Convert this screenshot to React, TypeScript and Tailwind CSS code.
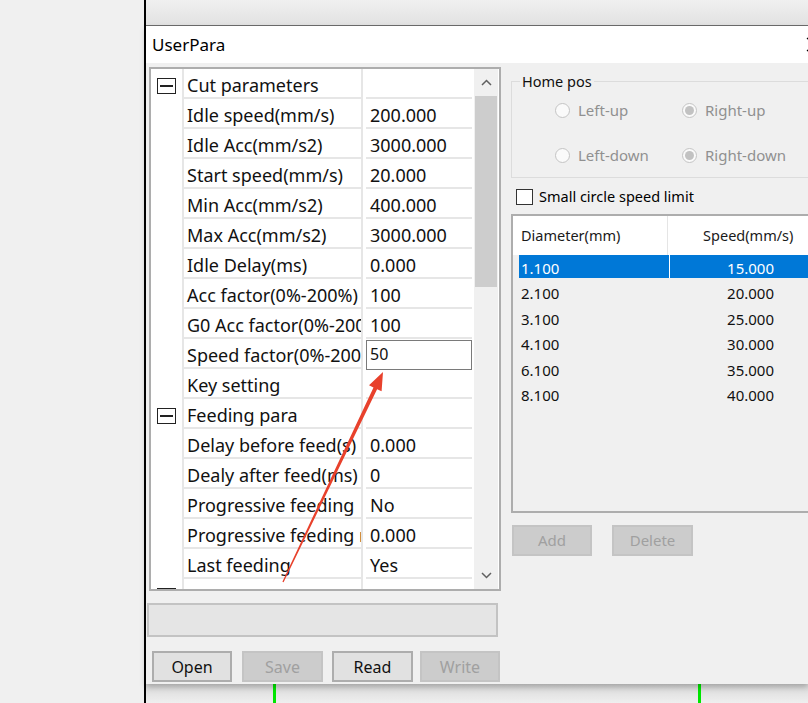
import React from "react";

type Row = { group?: boolean; name: string; value?: string; edit?: boolean };

const rows: Row[] = [
  { group: true, name: "Cut parameters" },
  { name: "Idle speed(mm/s)", value: "200.000" },
  { name: "Idle Acc(mm/s2)", value: "3000.000" },
  { name: "Start speed(mm/s)", value: "20.000" },
  { name: "Min Acc(mm/s2)", value: "400.000" },
  { name: "Max Acc(mm/s2)", value: "3000.000" },
  { name: "Idle Delay(ms)", value: "0.000" },
  { name: "Acc factor(0%-200%)", value: "100" },
  { name: "G0 Acc factor(0%-200%)", value: "100" },
  { name: "Speed factor(0%-200%)", value: "50", edit: true },
  { name: "Key setting", value: "" },
  { group: true, name: "Feeding para" },
  { name: "Delay before feed(s)", value: "0.000" },
  { name: "Dealy after feed(ms)", value: "0" },
  { name: "Progressive feeding", value: "No" },
  { name: "Progressive feeding rate", value: "0.000" },
  { name: "Last feeding", value: "Yes" },
  { group: true, name: "" },
];

const speeds = [
  { d: "1.100", s: "15.000" },
  { d: "2.100", s: "20.000" },
  { d: "3.100", s: "25.000" },
  { d: "4.100", s: "30.000" },
  { d: "6.100", s: "35.000" },
  { d: "8.100", s: "40.000" },
];

/* ---------- small pieces ---------- */
function Toggle() {
  return (
    <div className="flex h-[16px] w-[19px] items-center justify-center border-[1.5px] border-[#222]">
      <div className="h-[1.5px] w-[13px] bg-[#222]" />
    </div>
  );
}

function Chevron({ down }: { down?: boolean }) {
  return (
    <svg width="11" height="7" viewBox="0 0 11 7">
      <polyline
        points={down ? "1,1 5.5,5.5 10,1" : "1,6 5.5,1.5 10,6"}
        fill="none"
        stroke="#606060"
        strokeWidth="1.5"
      />
    </svg>
  );
}

function GridRow({ row }: { row: Row }) {
  return (
    <div className="flex h-[30px] shrink-0">
      <div className="w-[31px] shrink-0 pl-[6px] pt-[9px]">{row.group && <Toggle />}</div>
      <div className="w-[181px] shrink-0 overflow-hidden whitespace-nowrap border-x-2 border-b-2 border-[#e6e6e6] pl-[3px] pt-[4px] leading-[24px]">
        {row.name}
      </div>
      <div className="w-[3px] shrink-0" />
      <div className="relative w-[106px] shrink-0 whitespace-nowrap border-b-2 border-[#e6e6e6] pl-[4px] pt-[4px] leading-[24px]">
        {row.edit ? (
          <div className="absolute left-0 top-[1px] h-[30px] w-[106px] border border-[#7a7a7a] bg-white pl-[3px] text-[16px] leading-[26px]">
            {row.value}
          </div>
        ) : (
          row.value
        )}
      </div>
    </div>
  );
}

function Radio({ label, checked }: { label: string; checked?: boolean }) {
  return (
    <div className="flex w-[127px] items-center">
      <span className="flex h-[15px] w-[15px] shrink-0 items-center justify-center rounded-full border border-[#c4c4c4] bg-[#fafafa]">
        {checked && <span className="h-[9px] w-[9px] rounded-full bg-[#c2c2c2]" />}
      </span>
      <span className="ml-[8px] whitespace-nowrap text-[15px] leading-[20px] text-[#909090]">{label}</span>
    </div>
  );
}

/* ---------- main ---------- */
export default function App() {
  return (
    <div className="relative flex h-[703px] w-[808px] overflow-hidden bg-[#f0f0f0] font-['Noto_Sans',sans-serif] text-black">
      <div className="w-[144px] shrink-0 bg-[#f0f0f0]" />
      <div className="w-[2px] shrink-0 bg-black" />

      <div className="flex min-w-0 flex-1 flex-col">
        {/* window behind, top */}
        <div className="h-[26px] shrink-0 border-b border-[#6d6d6d] bg-gradient-to-b from-[#f0f0f0] to-[#e2e2e2]" />

        {/* dialog */}
        <div className="relative z-10 flex shrink-0 flex-col shadow-[0_3px_6px_rgba(0,0,0,0.25)]">
          <div className="flex h-[37px] items-center bg-white pl-[6px] text-[17px]">
            <span>UserPara</span>
            <svg className="-mr-[14px] ml-auto shrink-0" width="16" height="15" viewBox="0 0 16 15">
              <path d="M1 1 L15 14 M15 1 L1 14" stroke="#000" strokeWidth="1.2" />
            </svg>
          </div>

          <div className="flex h-[621px] overflow-hidden bg-[#f0f0f0] pl-[3px]">
            {/* LEFT: property grid */}
            <div className="mt-[4px] flex w-[352px] shrink-0 flex-col">
              <div className="flex h-[524px] border-2 border-[#adadad] bg-white text-[18px] text-[#111]">
                <div className="flex w-[323px] shrink-0 flex-col overflow-hidden">
                  {rows.map((r, i) => (
                    <GridRow key={i} row={r} />
                  ))}
                </div>
                <div className="flex w-[24px] shrink-0 flex-col bg-[#f0f0f0]">
                  <div className="flex h-[27px] items-center justify-center">
                    <Chevron />
                  </div>
                  <div className="mx-[1px] h-[191px] bg-[#cdcdcd]" />
                  <div className="flex-1" />
                  <div className="flex h-[27px] items-center justify-center">
                    <Chevron down />
                  </div>
                </div>
              </div>

              <div className="-ml-[2px] mt-[12px] h-[34px] w-[351px] border-2 border-[#c3c3c3] bg-[#e5e5e5]" />

              <div className="mt-[14px] flex h-[31px] text-[16px]">
                <button className="ml-[3px] w-[80px] border-2 border-[#adadad] bg-[#e1e1e1] text-[#111]">Open</button>
                <button className="ml-[10px] w-[81px] border-2 border-[#c4c4c4] bg-[#cccccc] text-[#a0a0a0]">Save</button>
                <button className="ml-[9px] w-[81px] border-2 border-[#adadad] bg-[#e1e1e1] text-[#111]">Read</button>
                <button className="ml-[7px] w-[80px] border-2 border-[#c4c4c4] bg-[#cccccc] text-[#a0a0a0]">Write</button>
              </div>
            </div>

            {/* RIGHT */}
            <div className="ml-[10px] mt-[9px] flex w-[320px] shrink-0 flex-col">
              <fieldset className="h-[106px] w-[282px] border border-[#dcdcdc]">
                <legend className="ml-[8px] px-[2px] text-[14.5px] leading-[18px] text-[#111]">Home pos</legend>
                <div className="mt-[10px] flex h-[20px] pl-[43px]">
                  <Radio label="Left-up" />
                  <Radio label="Right-up" checked />
                </div>
                <div className="mt-[25px] flex h-[20px] pl-[43px]">
                  <Radio label="Left-down" />
                  <Radio label="Right-down" checked />
                </div>
              </fieldset>

              <div className="mt-[9px] flex h-[20px] items-center pl-[5px]">
                <span className="h-[16px] w-[17px] border border-[#333] bg-white" />
                <span className="ml-[6px] whitespace-nowrap text-[14.5px]">Small circle speed limit</span>
              </div>

              <div className="mt-[7px] h-[299px] border-2 border-[#adadad] bg-[#f0f0f0]">
                <div className="flex h-[39px] bg-white text-[14.5px] text-[#1a1a1a]">
                  <div className="flex w-[155px] items-center border-r border-[#e5e5e5] pl-[8px]">Diameter(mm)</div>
                  <div className="flex w-[162px] items-center justify-center">Speed(mm/s)</div>
                </div>
                {speeds.map((s, i) => (
                  <div key={s.d} className="h-[25.4px] pl-[6px] text-[15px]">
                    <div
                      className={
                        i === 0
                          ? "flex h-[23px] bg-[#0078d7] leading-[26px] text-white"
                          : "flex h-[23px] leading-[26px] text-[#111]"
                      }
                    >
                      <div className={i === 0 ? "w-[151px] border-r border-white pl-[2px]" : "w-[151px] pl-[2px]"}>{s.d}</div>
                      <div className="w-[104px] text-right">{s.s}</div>
                    </div>
                  </div>
                ))}
              </div>

              <div className="mt-[12px] flex h-[31px] text-[15px] text-[#a0a0a0]">
                <button className="ml-[1px] w-[80px] border-2 border-[#c4c4c4] bg-[#cccccc]">Add</button>
                <button className="ml-[20px] w-[81px] border-2 border-[#c4c4c4] bg-[#cccccc]">Delete</button>
              </div>
            </div>
          </div>
        </div>

        {/* window behind, bottom */}
        <div className="flex h-[19px] shrink-0 bg-gradient-to-b from-[#d9d9d9] to-[#efefef]">
          <div className="ml-[127px] w-[3px] bg-[#00e600]" />
          <div className="ml-[422px] w-[3px] bg-[#00e600]" />
        </div>
      </div>

      {/* red annotation arrow */}
      <svg className="pointer-events-none absolute left-0 top-0 z-20" width="808" height="703" viewBox="0 0 808 703">
        <polygon
          points="383,372 381.6,391.3 377.1,389.2 283.6,582.3 282.4,581.7 373.5,387.4 369,385.3"
          fill="#e8412c"
        />
      </svg>
    </div>
  );
}
